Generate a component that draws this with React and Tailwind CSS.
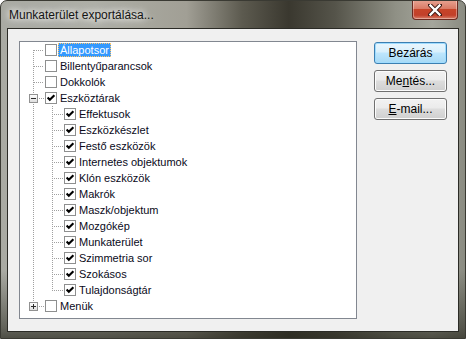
import React from "react";

const items = [
  { label: "Állapotsor", level: 1, kind: "first", checked: false, selected: true },
  { label: "Billentyűparancsok", level: 1, kind: "mid", checked: false },
  { label: "Dokkolók", level: 1, kind: "mid", checked: false },
  { label: "Eszköztárak", level: 1, kind: "expanded", checked: true },
  { label: "Effektusok", level: 2, checked: true },
  { label: "Eszközkészlet", level: 2, checked: true },
  { label: "Festő eszközök", level: 2, checked: true },
  { label: "Internetes objektumok", level: 2, checked: true },
  { label: "Klón eszközök", level: 2, checked: true },
  { label: "Makrók", level: 2, checked: true },
  { label: "Maszk/objektum", level: 2, checked: true },
  { label: "Mozgókép", level: 2, checked: true },
  { label: "Munkaterület", level: 2, checked: true },
  { label: "Szimmetria sor", level: 2, checked: true },
  { label: "Szokásos", level: 2, checked: true },
  { label: "Tulajdonságtár", level: 2, checked: true, last: true },
  { label: "Menük", level: 1, kind: "collapsed", checked: false },
];

const DOT = "#a0a0a0";

function ExpBox({ plus }) {
  return (
    <g>
      <rect x="9.5" y="4.5" width="8" height="8" fill="url(#bx)" stroke="#919191" />
      <line x1="11" y1="8.5" x2="16" y2="8.5" stroke="#2b2b2b" />
      {plus && <line x1="13.5" y1="6" x2="13.5" y2="11" stroke="#2b2b2b" />}
    </g>
  );
}

function Gutter({ item }) {
  if (item.level === 1) {
    return (
      <svg width="25" height="16" className="shrink-0">
        <defs>
          <linearGradient id="bx" x1="0" y1="0" x2="0" y2="1">
            <stop offset="0" stopColor="#ffffff" />
            <stop offset="1" stopColor="#dcdcdc" />
          </linearGradient>
        </defs>
        {item.kind === "first" && (
          <line x1="13.5" y1="8" x2="13.5" y2="16" stroke={DOT} strokeDasharray="1 1" />
        )}
        {item.kind === "mid" && (
          <line x1="13.5" y1="0" x2="13.5" y2="16" stroke={DOT} strokeDasharray="1 1" />
        )}
        {item.kind === "expanded" && (
          <>
            <line x1="13.5" y1="0" x2="13.5" y2="4" stroke={DOT} strokeDasharray="1 1" />
            <line x1="13.5" y1="14" x2="13.5" y2="16" stroke={DOT} strokeDasharray="1 1" />
          </>
        )}
        {item.kind === "collapsed" && (
          <line x1="13.5" y1="0" x2="13.5" y2="4" stroke={DOT} strokeDasharray="1 1" />
        )}
        {item.kind === "first" || item.kind === "mid" ? (
          <line x1="14" y1="8.5" x2="24" y2="8.5" stroke={DOT} strokeDasharray="1 1" />
        ) : (
          <>
            <line x1="19" y1="8.5" x2="24" y2="8.5" stroke={DOT} strokeDasharray="1 1" />
            <ExpBox plus={item.kind === "collapsed"} />
          </>
        )}
      </svg>
    );
  }
  return (
    <svg width="44" height="16" className="shrink-0">
      <line x1="13.5" y1="0" x2="13.5" y2="16" stroke={DOT} strokeDasharray="1 1" />
      <line x1="32.5" y1="0" x2="32.5" y2={item.last ? 9 : 16} stroke={DOT} strokeDasharray="1 1" />
      <line x1="34" y1="8.5" x2="43" y2="8.5" stroke={DOT} strokeDasharray="1 1" />
    </svg>
  );
}

function CheckBox({ checked }) {
  return (
    <svg width="12" height="12" className="shrink-0">
      <rect x="0.5" y="0.5" width="11" height="11" fill="#fff" stroke="#8e8f8f" />
      {checked && (
        <path d="M2.6 5.6 L4.8 7.8 L9.4 3.2" fill="none" stroke="#000" strokeWidth="2.1" />
      )}
    </svg>
  );
}

function Row({ item }) {
  return (
    <div className="flex h-[16px] items-center">
      <Gutter item={item} />
      <CheckBox checked={item.checked} />
      <span
        className={
          "ml-[1px] flex h-[14px] items-center px-[2px] leading-none whitespace-nowrap " +
          (item.selected
            ? "bg-[#3399ff] text-white outline-1 outline-dotted outline-[#ffc66e] -outline-offset-1"
            : "text-[#0a0a1a]")
        }
      >
        {item.label}
      </span>
    </div>
  );
}

function Btn({ children, primary }) {
  return (
    <button
      className={
        "flex h-[22px] w-[73px] items-center justify-center rounded-[3px] border text-[12px] leading-none text-black " +
        (primary
          ? "border-[#3c7fb1] bg-[linear-gradient(#eaf6fd_0%,#d9f0fc_45%,#bee6fd_50%,#a7d9f5_100%)] shadow-[inset_0_0_0_1px_#9fdcff]"
          : "border-[#707070] bg-[linear-gradient(#f2f2f2_0%,#ebebeb_45%,#dddddd_50%,#cfcfcf_100%)] shadow-[inset_0_0_0_1px_#fcfcfc]")
      }
    >
      {children}
    </button>
  );
}

export default function App() {
  return (
    <div
      className="flex h-[339px] w-[466px] flex-col overflow-hidden rounded-t-[7px] border border-[#3a3a33] bg-[linear-gradient(180deg,rgba(0,0,0,0)_0%,rgba(0,0,0,0)_80%,rgba(40,40,30,0.55)_97%,rgba(40,40,30,0.7)_100%),linear-gradient(90deg,#a9aaa3_0%,#aeafa7_20%,#a19f95_40%,#5c5a4f_52%,#3a382f_62%,#55544a_72%,#8f9085_85%,#a5a69c_93%,#8a8b81_100%)] px-[6px] pb-[6px] font-['Liberation_Sans',Arial,sans-serif]"
    >
      <div className="flex h-[27px] shrink-0 items-start">
        <div className="mt-[7px] ml-[2px] text-[12px] leading-[14px] text-[#141414] [text-shadow:0_0_6px_#ffffff,0_0_10px_#ffffff]">
          Munkaterület exportálása...
        </div>
        <div className="ml-auto -mt-px mr-[1px] flex h-[20px] w-[46px] items-center justify-center rounded-b-[4px] border border-t-0 border-[#6b2a20] bg-[linear-gradient(#e8a493_0%,#d97b66_45%,#c74428_50%,#c2402a_80%,#d9806a_100%)] shadow-[inset_0_0_0_1px_rgba(255,255,255,0.35)]">
          <svg width="14" height="12" viewBox="0 0 14 12">
            <path d="M2 1 L12 11 M12 1 L2 11" stroke="#3b1a14" strokeWidth="4.2" strokeLinecap="round" />
            <path d="M2.5 1.5 L11.5 10.5 M11.5 1.5 L2.5 10.5" stroke="#ffffff" strokeWidth="2.4" strokeLinecap="square" />
          </svg>
        </div>
      </div>
      <div className="flex flex-1 border border-[#2b2b26] bg-[#f0f0f0] pt-[12px] pl-[11px]">
        <div className="h-[278px] w-[338px] shrink-0 border border-[#828790] bg-white text-[11px]">
          {items.map((it) => (
            <Row key={it.label} item={it} />
          ))}
        </div>
        <div className="mt-px ml-[17px] flex flex-col gap-[6px]">
          <Btn primary>Bezárás</Btn>
          <Btn>
            Me<span className="underline">n</span>tés...
          </Btn>
          <Btn>
            <span className="underline">E</span>-mail...
          </Btn>
        </div>
      </div>
    </div>
  );
}
